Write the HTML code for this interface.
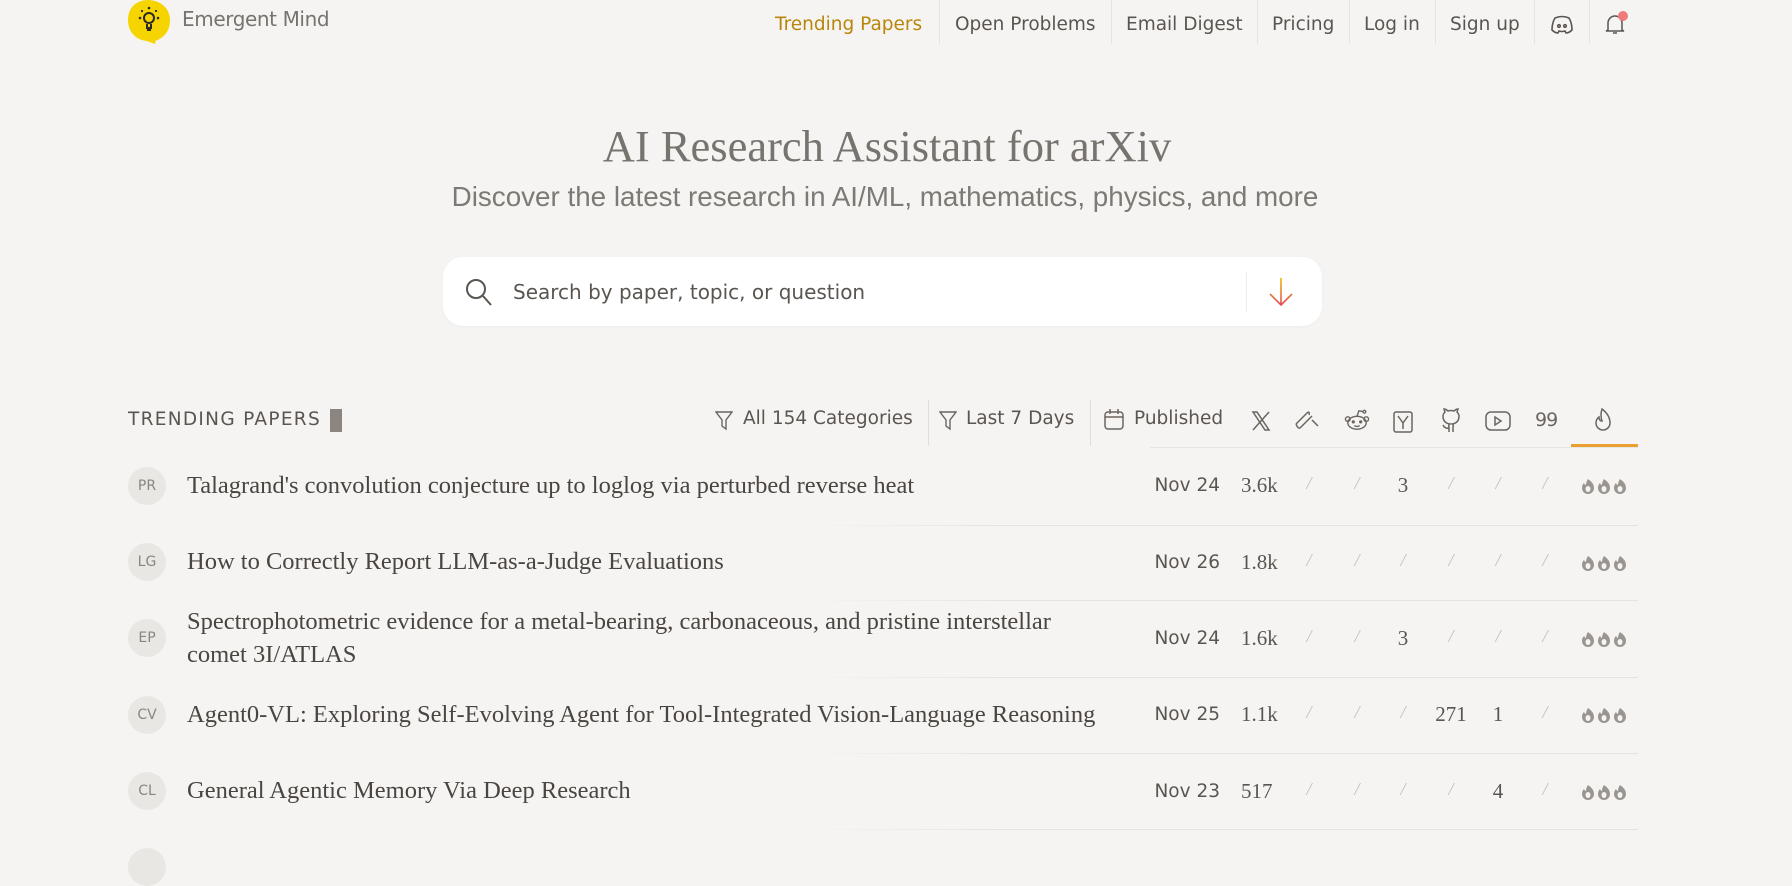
<!DOCTYPE html>
<html><head><meta charset="utf-8"><style>
*{margin:0;padding:0;box-sizing:border-box}
body{width:1792px;height:855px;background:#f6f4f2;position:relative;overflow:hidden;font-family:"DejaVu Sans","Liberation Sans",sans-serif;color:#5a5550}
.a{position:absolute;white-space:nowrap}
.nav{top:11px;font-size:18.5px;color:#5a5550;height:28px;line-height:28px}
.sep{position:absolute;top:0;width:1px;height:44px;background:#e6e3df}
.serif{font-family:"Liberation Serif",serif}
.row .av{position:absolute;left:128px;width:38px;height:38px;border-radius:50%;background:#e9e7e4;color:#8a8580;font-size:14px;text-align:center;line-height:38px}
.t{left:187px;font-family:"Liberation Serif",serif;font-size:24.5px;line-height:30px;color:#4a4540}
.d{font-size:18.5px;color:#5a5550}
.n{font-family:"Liberation Serif",serif;font-size:21px;color:#5a5550}
.sl{color:#c4c0bb;font-size:18px;font-family:"Liberation Serif",serif;font-style:italic}
.line{position:absolute;left:800px;width:838px;height:1px;background:linear-gradient(90deg,rgba(230,227,223,0),#e6e3df 25%)}
svg{position:absolute}
</style></head><body>
<svg style="left:127px;top:0" width="46" height="46" viewBox="0 0 46 46"><path d="M21 0C9 0 1 8 1 20c0 12 8 20 19 21l8 3c1-2 0-3 0-3 9-3 15-10 15-21C43 8 33 0 21 0z" fill="#f6d400"/><g stroke="#2a2a2a" stroke-width="2" fill="none"><circle cx="22" cy="18" r="5"/><path d="M20 24v4h4v-4M20 30h4"/></g><g fill="#2a2a2a"><circle cx="13" cy="18" r="1.3"/><circle cx="31" cy="18" r="1.3"/><circle cx="22" cy="8" r="1.3"/><circle cx="15" cy="11" r="1.1"/><circle cx="29" cy="11" r="1.1"/></g></svg>
<div class="a" style="left:182px;top:7px;font-size:20px;color:#77736e;letter-spacing:-0.4px">Emergent Mind</div>
<div class="a nav" style="left:775px;color:#b8860b">Trending Papers</div>
<div class="sep" style="left:939px"></div>
<div class="a nav" style="left:955px">Open Problems</div>
<div class="sep" style="left:1111px"></div>
<div class="a nav" style="left:1126px">Email Digest</div>
<div class="sep" style="left:1257px"></div>
<div class="a nav" style="left:1272px">Pricing</div>
<div class="sep" style="left:1349px"></div>
<div class="a nav" style="left:1364px">Log in</div>
<div class="sep" style="left:1435px"></div>
<div class="a nav" style="left:1450px">Sign up</div>
<div class="sep" style="left:1534px"></div>
<svg style="left:1550px;top:14px" width="24" height="22" viewBox="0 0 24 22" fill="none" stroke="#5a5550" stroke-width="1.6"><path d="M5 4q7-3 14 0q3 5 3 12q-3 3-6 3l-1-2q-3 1-6 0l-1 2q-3 0-6-3q0-7 3-12z"/><circle cx="9" cy="12" r="1.3"/><circle cx="15" cy="12" r="1.3"/></svg>
<div class="sep" style="left:1589px"></div>
<svg style="left:1604px;top:12px" width="22" height="24" viewBox="0 0 22 24" fill="none" stroke="#5a5550" stroke-width="1.5"><path d="M4 18V11a7 7 0 0 1 14 0v7l2 1H2z"/><path d="M9 21h4"/></svg>
<div class="a" style="left:1618px;top:11px;width:10px;height:10px;border-radius:50%;background:#f07a7a"></div>
<div class="a serif" style="left:0;width:1774px;text-align:center;top:120px;font-size:44.5px;color:#77736e">AI Research Assistant for arXiv</div>
<div class="a" style="left:0;width:1770px;text-align:center;top:181px;font-size:27.8px;color:#7d7974;font-family:'Liberation Sans',sans-serif">Discover the latest research in AI/ML, mathematics, physics, and more</div>
<div class="a" style="left:443px;top:257px;width:879px;height:69px;background:#fff;border-radius:20px;box-shadow:0 1px 3px rgba(0,0,0,0.03)"></div>
<svg style="left:464px;top:277px" width="32" height="32" viewBox="0 0 32 32" fill="none" stroke="#5a5550" stroke-width="2"><circle cx="12" cy="12" r="9"/><path d="M19 19l8 9"/></svg>
<div class="a" style="left:513px;top:280px;font-size:20px;color:#5a5550">Search by paper, topic, or question</div>
<div class="a" style="left:1246px;top:272px;width:1px;height:40px;background:#eeebe8"></div>
<svg style="left:1266px;top:276px" width="30" height="32" viewBox="0 0 30 32" fill="none" stroke-width="1.6"><defs><linearGradient id="g" x1="0" y1="0" x2="0" y2="1"><stop offset="0" stop-color="#f2b600"/><stop offset="1" stop-color="#e04a5a"/></linearGradient></defs><path d="M15 2v27M4 18l11 11 11-11" stroke="url(#g)"/></svg>
<div class="a" style="left:128px;top:409px;font-size:18.5px;letter-spacing:1.3px;color:#5a5550">TRENDING PAPERS</div>
<div class="a" style="left:330px;top:409px;width:12px;height:23px;background:#8a8580"></div>
<svg style="left:715px;top:410px" width="18" height="22" viewBox="0 0 18 22" fill="none" stroke="#6a6560" stroke-width="1.4"><path d="M1 2h16l-6 8v9l-4-3v-6z"/></svg>
<div class="a" style="left:743px;top:408px;font-size:18.5px">All 154 Categories</div>
<div class="a" style="left:928px;top:400px;width:1px;height:46px;background:#e2dfdb"></div>
<svg style="left:939px;top:410px" width="18" height="22" viewBox="0 0 18 22" fill="none" stroke="#6a6560" stroke-width="1.4"><path d="M1 2h16l-6 8v9l-4-3v-6z"/></svg>
<div class="a" style="left:966px;top:408px;font-size:18.5px">Last 7 Days</div>
<div class="a" style="left:1090px;top:400px;width:1px;height:46px;background:#e2dfdb"></div>
<svg style="left:1103px;top:408px" width="22" height="24" viewBox="0 0 22 24" fill="none" stroke="#6a6560" stroke-width="1.5"><rect x="2" y="4" width="18" height="17" rx="3"/><path d="M2 9h18M7 1v5M15 1v5"/></svg>
<div class="a" style="left:1134px;top:408px;font-size:18.5px">Published</div>
<svg style="left:1250px;top:410px" width="22" height="22" viewBox="0 0 22 22" fill="none" stroke="#6a6560" stroke-width="1.5"><path d="M3 2h4l12 18h-4zM19 2L3 20"/></svg>
<svg style="left:1294px;top:410px" width="26" height="22" viewBox="0 0 26 22" fill="none" stroke="#6a6560" stroke-width="1.5"><path d="M2 14l12-12M6 18l12-12M2 14q2 5 4 4M14 2q2 0 1 3M18 10l6 6"/></svg>
<svg style="left:1344px;top:408px" width="26" height="24" viewBox="0 0 28 26" fill="none" stroke="#6a6560" stroke-width="1.5"><ellipse cx="14" cy="16" rx="10" ry="7"/><circle cx="4" cy="12" r="2.5"/><circle cx="24" cy="12" r="2.5"/><path d="M14 9l2-6 5 1"/><circle cx="22" cy="4" r="1.5"/><circle cx="10" cy="15" r="1" fill="#6a6560"/><circle cx="18" cy="15" r="1" fill="#6a6560"/><path d="M11 19q3 2 6 0"/></svg>
<svg style="left:1392px;top:410px" width="22" height="24" viewBox="0 0 22 24" fill="none" stroke="#6a6560" stroke-width="1.5"><rect x="2" y="2" width="18" height="20" rx="2"/><path d="M6 6l5 7 5-7M11 13v6"/></svg>
<svg style="left:1440px;top:408px" width="24" height="26" viewBox="0 0 24 26" fill="none" stroke="#6a6560" stroke-width="1.5"><path d="M9 24v-5q-1-2 1-3q-7-1-7-8q0-2 2-4l-1-3q2 0 4 2q3-1 6 0q2-2 4-2l-1 3q2 2 2 4q0 7-7 8q2 1 1 3v5M9 20q-4 1-6-3"/></svg>
<svg style="left:1484px;top:410px" width="28" height="22" viewBox="0 0 28 22" fill="none" stroke="#6a6560" stroke-width="1.5"><rect x="2" y="2" width="24" height="18" rx="5"/><path d="M11 7v8l6-4z"/></svg>
<div class="a" style="left:1535px;top:409px;font-size:19px;color:#6a6560;letter-spacing:-1px">99</div>
<svg style="left:1592px;top:407px" width="22" height="26" viewBox="0 0 22 26" fill="none" stroke="#6a6560" stroke-width="1.5"><path d="M10 2q8 6 8 14a7 7 0 0 1-14 0q0-4 3-6q0 4 3 4q-2-6 0-12z"/></svg>
<div class="a" style="left:1150px;top:447px;width:488px;height:1px;background:#e8e5e1"></div>
<div class="a" style="left:1571px;top:444px;width:67px;height:3px;background:#e9a030"></div>
<div class="row">
<div class="av" style="top:467px">PR</div>
<div class="a t" style="top:471px">Talagrand's convolution conjecture up to loglog via perturbed reverse heat</div>
<div class="line" style="top:525px"></div>
<div class="av" style="top:543px">LG</div>
<div class="a t" style="top:547px">How to Correctly Report LLM-as-a-Judge Evaluations</div>
<div class="line" style="top:600px"></div>
<div class="av" style="top:619px">EP</div>
<div class="a t" style="top:607px">Spectrophotometric evidence for a metal-bearing, carbonaceous, and pristine interstellar</div>
<div class="a t" style="top:640px">comet 3I/ATLAS</div>
<div class="line" style="top:677px"></div>
<div class="av" style="top:696px">CV</div>
<div class="a t" style="top:700px">Agent0-VL: Exploring Self-Evolving Agent for Tool-Integrated Vision-Language Reasoning</div>
<div class="line" style="top:753px"></div>
<div class="av" style="top:772px">CL</div>
<div class="a t" style="top:776px">General Agentic Memory Via Deep Research</div>
<div class="line" style="top:829px"></div>
<div class="av" style="top:848px"></div>
</div>
<div id="cols"></div>
<script>
var rows=[[486,'Nov 24','3.6k',['/','/','3','/','/','/']],[563,'Nov 26','1.8k',['/','/','/','/','/','/']],[639,'Nov 24','1.6k',['/','/','3','/','/','/']],[715,'Nov 25','1.1k',['/','/','/','271','1','/']],[792,'Nov 23','517',['/','/','/','/','4','/']]];
var xs=[1309,1357,1403,1451,1498,1545];var h='';
rows.forEach(function(r){var y=r[0];
h+='<div class="a d" style="left:1100px;width:120px;text-align:right;top:'+(y-11)+'px">'+r[1]+'</div>';
h+='<div class="a n" style="left:1241px;top:'+(y-13)+'px">'+r[2]+'</div>';
r[3].forEach(function(v,i){h+='<div class="a '+(v=='/'?'sl':'n')+'" style="left:'+(xs[i]-30)+'px;width:60px;text-align:center;top:'+(y-13)+'px">'+v+'</div>';});
for(var k=0;k<3;k++){h+='<svg style="left:'+(1581+k*16)+'px;top:'+(y-8)+'px" width="14" height="16" viewBox="0 0 14 16"><path d="M7 1q6 4 6 9a6 6 0 0 1-12 0q0-3 2-5q1 2 2 2q0-3 2-6z" fill="#9a9590"/><ellipse cx="7" cy="11" rx="2.5" ry="3" fill="#f6f4f2"/></svg>';}
});
document.getElementById('cols').innerHTML=h;
</script>
</body></html>
